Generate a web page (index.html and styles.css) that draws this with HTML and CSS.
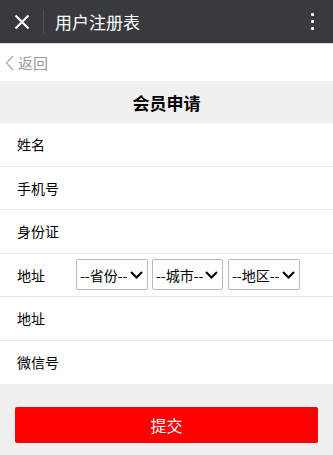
FILE: index.html
```html
<!DOCTYPE html>
<html lang="zh-CN">
<head>
<meta charset="utf-8">
<title>用户注册表</title>
<link rel="stylesheet" href="styles.css">
</head>
<body>
<header class="topbar">
  <span class="close">
    <svg width="16" height="16" viewBox="0 0 16 16"><path d="M1.5 1.5L14.5 14.5M14.5 1.5L1.5 14.5" stroke="#fff" stroke-width="2" fill="none"/></svg>
  </span>
  <span class="divider"></span>
  <span class="top-title">用户注册表</span>
  <span class="more"><i></i><i></i><i></i></span>
</header>
<nav class="backbar">
  <svg class="back-arrow" width="9" height="16" viewBox="0 0 9 16"><path d="M8 1L1.5 8L8 15" stroke="#aaa" stroke-width="1.3" fill="none"/></svg>
  <span class="back-text">返回</span>
</nav>
<h1 class="form-title">会员申请</h1>
<form class="form">
  <div class="row"><label class="label">姓名</label></div>
  <div class="row"><label class="label">手机号</label></div>
  <div class="row"><label class="label">身份证</label></div>
  <div class="row">
    <label class="label">地址</label>
    <div class="selects">
      <div class="sel">--省份--<svg width="13" height="8" viewBox="0 0 13 8"><path d="M1 1L6.5 6.5L12 1" stroke="#000" stroke-width="2" fill="none"/></svg></div>
      <div class="sel">--城市--<svg width="13" height="8" viewBox="0 0 13 8"><path d="M1 1L6.5 6.5L12 1" stroke="#000" stroke-width="2" fill="none"/></svg></div>
      <div class="sel">--地区--<svg width="13" height="8" viewBox="0 0 13 8"><path d="M1 1L6.5 6.5L12 1" stroke="#000" stroke-width="2" fill="none"/></svg></div>
    </div>
  </div>
  <div class="row"><label class="label">地址</label></div>
  <div class="row last"><label class="label">微信号</label></div>
  <div class="actions">
    <button type="button" class="submit">提交</button>
  </div>
</form>
</body>
</html>
```

FILE: styles.css
```css
* { box-sizing: border-box; }
html, body {
  margin: 0;
  padding: 0;
  background: #f0f0f0;
  font-family: "Noto Sans CJK SC", "Noto Sans", sans-serif;
  color: #000;
}
.topbar {
  height: 44px;
  background: #393a3f;
  display: flex;
  align-items: center;
  border-bottom: 1px solid #d8d8d8;
}
.close {
  width: 43px;
  display: flex;
  justify-content: center;
  padding-left: 1px;
}
.close svg { display: block; }
.divider {
  width: 1px;
  height: 24px;
  background: #4d4e53;
}
.top-title {
  color: #fff;
  font-size: 17px;
  margin-left: 11px;
  flex: 1;
  line-height: 1;
}
.more {
  width: 16px;
  margin-right: 13px;
  display: flex;
  flex-direction: column;
  align-items: center;
  gap: 4px;
}
.more i {
  display: block;
  width: 3px;
  height: 3px;
  background: #fff;
  border-radius: 1px;
}
.backbar {
  height: 37px;
  background: #fff;
  display: flex;
  align-items: center;
  padding-left: 5px;
}
.back-arrow { display: block; }
.back-text {
  color: #9a9a9a;
  font-size: 15px;
  margin-left: 4px;
  line-height: 1;
}
.form-title {
  margin: 0;
  height: 42px;
  display: flex;
  align-items: center;
  justify-content: center;
  font-size: 17px;
  font-weight: bold;
  background: #f0f0f0;
}
.form {
  margin: 0;
}
.row {
  height: 43.5px;
  background: #fff;
  display: flex;
  align-items: center;
  padding-left: 17px;
  border-bottom: 1px solid #e8e8e8;
}
.row.last { border-bottom: none; }
.label {
  width: 59px;
  font-size: 14px;
  line-height: 1;
}
.selects {
  display: flex;
  gap: 4px;
}
.sel {
  width: 72px;
  height: 31px;
  border: 1px solid #b8b8b8;
  border-radius: 2px;
  display: flex;
  align-items: center;
  justify-content: space-between;
  font-size: 14px;
  padding: 0 4px 0 3px;
  background: #fff;
}
.sel:nth-child(2) { width: 71px; margin-right: 1px; }
.sel svg { display: block; }
.actions {
  padding: 23px 15px 12px;
}
.submit {
  display: block;
  width: 100%;
  height: 36px;
  border: none;
  border-radius: 2px;
  background: #ff0000;
  color: #fff;
  font-family: inherit;
  font-size: 16px;
}
```
